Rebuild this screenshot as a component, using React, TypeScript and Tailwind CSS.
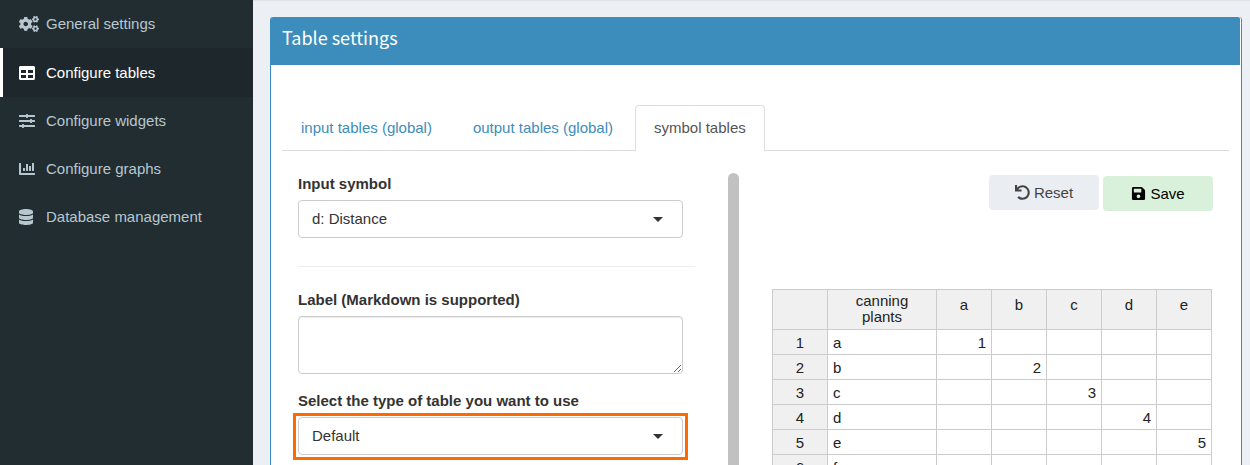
import type { ReactNode } from "react";
import { FaChartBar, FaCogs, FaDatabase, FaSave, FaSlidersH, FaTable, FaUndo } from "react-icons/fa";

const menu: { label: string; icon: ReactNode; active?: boolean }[] = [
  { label: "General settings", icon: <FaCogs className="h-4 w-5" /> },
  { label: "Configure tables", icon: <FaTable className="h-4 w-4" />, active: true },
  { label: "Configure widgets", icon: <FaSlidersH className="h-4 w-4" /> },
  { label: "Configure graphs", icon: <FaChartBar className="h-4 w-4" /> },
  { label: "Database management", icon: <FaDatabase className="h-4 w-[14px]" /> },
];

function Sidebar() {
  return (
    <nav className="w-[253px] shrink-0 bg-[#222d32] text-[#b8c7ce]">
      <ul>
        {menu.map((item) => (
          <li key={item.label}>
            <a
              href="#"
              className={
                item.active
                  ? "flex items-center border-l-3 border-white bg-[#1e282c] pt-[15px] pb-[14px] pl-4 text-white"
                  : "flex items-center border-l-3 border-transparent py-[14px] pl-4"
              }
            >
              <span className="flex w-[27px] items-center">{item.icon}</span>
              {item.label}
            </a>
          </li>
        ))}
      </ul>
    </nav>
  );
}

function Select({ id, value, options }: { id: string; value: string; options: string[] }) {
  return (
    <div className="grid grid-cols-1 items-center">
      <select
        id={id}
        defaultValue={value}
        className="col-start-1 row-start-1 w-full appearance-none rounded border border-[#ccc] bg-white px-[13px] py-2 leading-5 text-[#333]"
      >
        {options.map((o) => (
          <option key={o}>{o}</option>
        ))}
      </select>
      <span className="pointer-events-none col-start-1 row-start-1 mr-5 justify-self-end border-x-5 border-t-5 border-x-transparent border-t-[#333]" />
    </div>
  );
}

const columns = ["a", "b", "c", "d", "e"];
const rows = ["a", "b", "c", "d", "e", "f"];

function DistanceTable() {
  return (
    <table className="w-full table-fixed border-separate border-spacing-0 border-t border-l border-[#ccc] text-[#222]">
      <colgroup>
        <col className="w-[55px]" />
        <col className="w-[109px]" />
        {columns.map((c) => (
          <col key={c} className="w-[55px]" />
        ))}
      </colgroup>
      <thead>
        <tr className="h-10 bg-[#f0f0f0] align-top leading-4">
          <th className="border-r border-b border-[#ccc]" />
          <th className="border-r border-b border-[#ccc] px-4 pt-[3px] font-normal">canning plants</th>
          {columns.map((c) => (
            <th key={c} className="border-r border-b border-[#ccc] pt-[7px] font-normal">
              {c}
            </th>
          ))}
        </tr>
      </thead>
      <tbody>
        {rows.map((r, i) => (
          <tr key={r} className="h-[25px] leading-5">
            <th className="border-r border-b border-[#ccc] bg-[#f0f0f0] pt-px font-normal">{i + 1}</th>
            <td className="border-r border-b border-[#ccc] px-[5px] pt-px">{r}</td>
            {columns.map((c, j) => (
              <td key={c} className="border-r border-b border-[#ccc] px-[5px] pt-px text-right">
                {i === j && i < 5 ? i + 1 : ""}
              </td>
            ))}
          </tr>
        ))}
      </tbody>
    </table>
  );
}

function Tabs() {
  return (
    <div role="tablist" className="flex gap-[2px] border-b border-[#ddd] text-[#3c8dbc]">
      <button role="tab" className="border-t border-transparent px-[19px] py-3">
        input tables (global)
      </button>
      <button role="tab" className="border-t border-transparent px-5 py-3">
        output tables (global)
      </button>
      <button
        role="tab"
        aria-selected="true"
        className="-mb-px rounded-t border border-b-0 border-[#ddd] bg-white px-[18px] pt-3 pb-[13px] text-[#555]"
      >
        symbol tables
      </button>
    </div>
  );
}

export default function App() {
  return (
    <div className="flex h-screen overflow-hidden bg-[#ecf0f5] font-['Liberation_Sans',Arial,sans-serif] text-[15px] leading-5 text-[#333]">
      <Sidebar />
      <main className="min-w-0 flex-1 border-t border-[#dfe3e8] pt-4 pr-2 pl-[17px]">
        <section className="rounded-t-[3px] border-x border-[#3c8dbc] bg-white">
          <header className="mr-px h-12 rounded-t-[2px] bg-[#3c8dbc] px-[11px] pt-2">
            <h3 className="font-['Noto_Sans_CJK_SC',sans-serif] text-lg leading-6 text-white">Table settings</h3>
          </header>
          <div className="pt-10 pr-3 pl-[11px]">
            <Tabs />
            <div className="flex pt-[22px]">
              <form className="ml-4 w-[397px] shrink-0 pt-px">
                <div className="mr-3">
                  <label htmlFor="symbol" className="mb-1.5 block font-bold">
                    Input symbol
                  </label>
                  <Select id="symbol" value="d: Distance" options={["d: Distance"]} />
                </div>
                <hr className="mt-7 mb-[23px] border-[#eee]" />
                <div className="mr-3">
                  <label htmlFor="label" className="mb-1.5 block font-bold">
                    Label (Markdown is supported)
                  </label>
                  <textarea
                    id="label"
                    className="block h-[58px] w-full rounded border border-[#ccc] shadow-[inset_0_1px_1px_rgba(0,0,0,0.075)]"
                  />
                  <label htmlFor="type" className="mt-[17px] block pb-0.5 font-bold">
                    Select the type of table you want to use
                  </label>
                  <div className="-mx-[5px] border-3 border-[#ff6a00] px-0.5 pt-px pb-0.5">
                    <Select id="type" value="Default" options={["Default"]} />
                  </div>
                </div>
              </form>
              <div className="ml-[33px] h-[400px] w-[11px] shrink-0 rounded-full bg-[#c1c1c1]" />
              <div className="mr-4 ml-[33px] min-w-0 flex-1">
                <div className="flex justify-end gap-1 pt-0.5">
                  <button className="flex h-[35px] w-[110px] items-center justify-center gap-1 rounded bg-[#eaeef3] text-[#444]">
                    <FaUndo className="h-[15px] w-[15px]" />
                    Reset
                  </button>
                  <button className="mt-px flex h-[35px] w-[110px] items-center justify-center gap-1 rounded bg-[#d9f1da] text-black">
                    <FaSave className="h-[15px] w-[15px]" />
                    Save
                  </button>
                </div>
                <div className="mt-[78px] mr-px">
                  <DistanceTable />
                </div>
              </div>
            </div>
          </div>
        </section>
      </main>
    </div>
  );
}
